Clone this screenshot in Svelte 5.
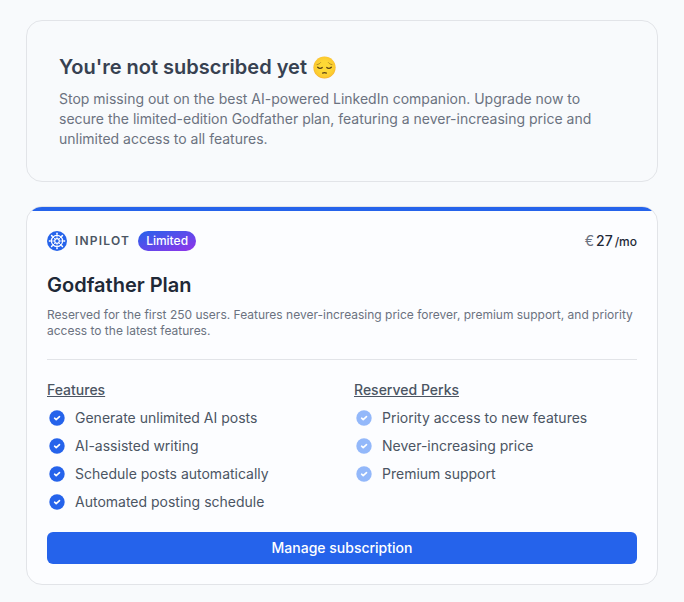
<script>
  const features = [
    'Generate unlimited AI posts',
    'AI-assisted writing',
    'Schedule posts automatically',
    'Automated posting schedule',
  ];
  const perks = ['Priority access to new features', 'Never-increasing price', 'Premium support'];
  const groups = [
    { title: 'Features', items: features, soft: false },
    { title: 'Reserved Perks', items: perks, soft: true },
  ];
  const spokes = [0, 45, 90, 135, 180, 225, 270, 315];
</script>

<main>
  <section class="card notice">
    <h1>
      You're not subscribed yet
      <svg class="emoji" viewBox="0 0 24 24" role="img" aria-label="Pensive face">
        <defs>
          <radialGradient id="face" cx="50%" cy="48%" r="52%">
            <stop offset="0.5" stop-color="#fdd835" />
            <stop offset="0.88" stop-color="#fcc92f" />
            <stop offset="1" stop-color="#f4ad2c" />
          </radialGradient>
        </defs>
        <circle cx="12.5" cy="12.5" r="11.1" fill="url(#face)" />
        <g fill="none" stroke="#5b4216" stroke-linecap="round">
          <path d="M5 9.6C6.6 9.4 7.9 8.6 8.6 7.6M20 9.6C18.4 9.4 17.1 8.6 16.4 7.6" stroke-width="0.8" stroke="#a67c22" />
          <path d="M5.6 12.2C6.4 13.5 9.2 13.7 10.2 12.5M19.4 12.2C18.6 13.5 15.8 13.7 14.8 12.5" stroke-width="1.3" />
          <path d="M10.6 18.1C11.6 17.7 13.4 17.7 14.4 18.1" stroke-width="1.3" />
        </g>
      </svg>
    </h1>
    <p>
      Stop missing out on the best AI-powered LinkedIn companion. Upgrade now to secure the
      limited-edition Godfather plan, featuring a never-increasing price and unlimited access to
      all features.
    </p>
  </section>

  <section class="card plan">
    <div class="accent"></div>
    <div class="body">
      <header>
        <svg class="logo" viewBox="0 0 20 20" aria-hidden="true">
          <circle cx="10" cy="10" r="10" fill="#2563eb" />
          <g fill="none" stroke="#fff">
            <circle cx="10" cy="10" r="5.6" stroke-width="1.2" />
            <circle cx="10" cy="10" r="2.3" stroke-width="1.2" />
            {#each spokes as angle}
              <g transform="rotate({angle} 10 10)">
                <path d="M10 7.6V2.6" stroke-width="0.8" />
                <path d="M10 2.8V2.4" stroke-width="1.6" stroke-linecap="round" />
              </g>
            {/each}
          </g>
        </svg>
        <span class="brand">INPILOT</span>
        <span class="badge">Limited</span>
        <div class="price">
          <span class="currency">€</span><span class="amount">27</span><span class="period">/mo</span>
        </div>
      </header>
      <h2>Godfather Plan</h2>
      <p class="description">
        Reserved for the first 250 users. Features never-increasing price forever, premium support,
        and priority access to the latest features.
      </p>
      <hr />
      <div class="columns">
        {#each groups as group}
          <div>
            <h3>{group.title}</h3>
            <ul>
              {#each group.items as item}
                <li>
                  <svg class:soft={group.soft} viewBox="0 0 20 20" aria-hidden="true">
                    <circle cx="10" cy="10" r="7.7" />
                    <path d="M7.6 10.2L9.2 11.7L12.5 8.6" />
                  </svg>
                  {item}
                </li>
              {/each}
            </ul>
          </div>
        {/each}
      </div>
      <button type="button">Manage subscription</button>
    </div>
  </section>
</main>

<style>
  :global(body) {
    background: #f8fafc;
  }
  main {
    display: flex;
    flex-direction: column;
    gap: 24px;
    padding: 20px 26px 16px;
    font-family: Inter, 'Liberation Sans', sans-serif;
    font-size: 14px;
    line-height: 20px;
    color: #4b5563;
  }
  h1, h2, h3, p, ul {
    margin: 0;
    padding: 0;
  }
  .card {
    border: 1px solid #e2e4e8;
    border-radius: 16px;
    overflow: hidden;
  }
  .notice {
    padding: 32px;
    color: #6b7280;
  }
  h1 {
    display: flex;
    align-items: center;
    gap: 5px;
    margin-bottom: 8px;
    font-size: 20px;
    line-height: 28px;
    font-weight: 600;
    color: #374151;
  }
  .emoji {
    width: 24px;
    height: 24px;
  }
  .plan {
    background: #fcfdff;
  }
  .accent {
    height: 4px;
    background: #2563eb;
  }
  .body {
    padding: 20px;
  }
  header {
    display: flex;
    align-items: center;
    gap: 8px;
  }
  .logo {
    width: 20px;
    height: 20px;
  }
  .brand {
    font-size: 12px;
    font-weight: 600;
    letter-spacing: 1.2px;
  }
  .badge {
    padding: 0 8px;
    border-radius: 10px;
    background: linear-gradient(to bottom right, #2563eb, #9333ea);
    color: #fff;
    font-size: 12px;
    font-weight: 500;
  }
  .price {
    display: flex;
    gap: 2px;
    align-items: baseline;
    margin-left: auto;
    line-height: 16px;
    font-weight: 500;
    color: #1f2937;
  }
  .currency {
    font-weight: 400;
    color: #6b7280;
  }
  .period {
    font-size: 12px;
  }
  h2 {
    margin: 20px 0 8px;
    font-size: 20px;
    line-height: 28px;
    font-weight: 600;
    color: #1f2937;
  }
  .description {
    font-size: 12px;
    line-height: 16px;
    color: #6b7280;
  }
  hr {
    margin: 20px 0;
    border: 0;
    border-top: 1px solid #e2e4e8;
  }
  .columns {
    display: grid;
    grid-template-columns: 1fr 1fr;
    gap: 24px;
  }
  h3 {
    font-size: 14px;
    font-weight: 500;
    text-decoration: underline;
  }
  ul {
    display: flex;
    flex-direction: column;
    gap: 8px;
    margin-top: 8px;
    list-style: none;
  }
  li {
    display: flex;
    align-items: center;
    gap: 8px;
  }
  li svg {
    width: 20px;
    height: 20px;
    fill: #2563eb;
  }
  li svg.soft {
    fill: #93b8fa;
  }
  li path {
    fill: none;
    stroke: #fff;
    stroke-width: 1.6;
    stroke-linecap: round;
    stroke-linejoin: round;
  }
  button {
    display: block;
    width: 100%;
    margin-top: 20px;
    padding: 6px 16px;
    border: 0;
    border-radius: 6px;
    background: #2563eb;
    color: #fff;
    font: inherit;
    font-weight: 500;
  }
</style>
